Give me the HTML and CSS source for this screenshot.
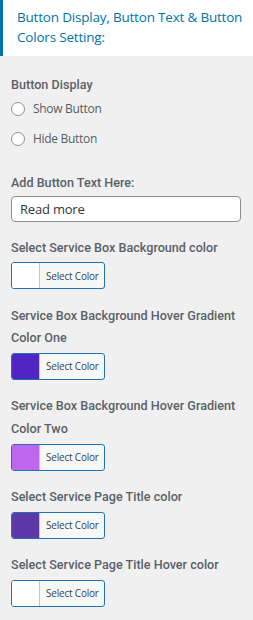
FILE: index.html
```html
<!DOCTYPE html>
<html>
<head>
<meta charset="utf-8">
<link rel="stylesheet" href="styles.css">
</head>
<body>
<div class="panel">
  <div class="section-head">
    <h3 class="section-title">Button Display, Button Text &amp; Button Colors Setting:</h3>
  </div>
  <div class="controls">
    <div class="control control-radio">
      <span class="control-title">Button Display</span>
      <label class="radio-row"><span class="radio"></span><span class="radio-label">Show Button</span></label>
      <label class="radio-row"><span class="radio"></span><span class="radio-label">Hide Button</span></label>
    </div>
    <div class="control control-text">
      <span class="control-title">Add Button Text Here:</span>
      <div class="text-input">Read more</div>
    </div>
    <div class="control">
      <span class="control-title">Select Service Box Background color</span>
      <div class="color-btn"><span class="swatch swatch-white"></span><span class="color-text">Select Color</span></div>
    </div>
    <div class="control">
      <span class="control-title">Service Box Background Hover Gradient Color One</span>
      <div class="color-btn"><span class="swatch swatch-blue"></span><span class="color-text">Select Color</span></div>
    </div>
    <div class="control">
      <span class="control-title">Service Box Background Hover Gradient Color Two</span>
      <div class="color-btn"><span class="swatch swatch-pink"></span><span class="color-text">Select Color</span></div>
    </div>
    <div class="control">
      <span class="control-title">Select Service Page Title color</span>
      <div class="color-btn"><span class="swatch swatch-purple"></span><span class="color-text">Select Color</span></div>
    </div>
    <div class="control">
      <span class="control-title">Select Service Page Title Hover color</span>
      <div class="color-btn"><span class="swatch swatch-white"></span><span class="color-text">Select Color</span></div>
    </div>
  </div>
</div>
</body>
</html>
```
FILE: styles.css
```css
html, body {
  margin: 0;
  padding: 0;
  background: #f0f0f0;
}
body {
  font-family: "Open Sans", "Noto Sans", sans-serif;
  width: 253px;
  height: 620px;
  overflow: hidden;
}
.section-head {
  background: #fff;
  border-left: 3px solid #0073aa;
  height: 56px;
  box-sizing: border-box;
  padding: 8px 10px 0 14px;
}
.section-title {
  margin: 0;
  font-size: 13.5px;
  font-weight: 400;
  line-height: 19.5px;
  color: #0073aa;
  letter-spacing: -0.2px;
}
.controls {
  padding: 18px 12px 0 11px;
  display: flex;
  flex-direction: column;
  gap: 15.5px;
}
.control {
  display: flex;
  flex-direction: column;
}
.control-radio { margin-bottom: 9px; }
.control-text { margin-bottom: -1px; }
.control-title {
  font-family: Roboto, "Open Sans", sans-serif;
  font-size: 12.6px;
  font-weight: 500;
  line-height: 22.6px;
  color: #5a6168;
  margin-bottom: 3px;
  letter-spacing: 0;
}
.control-text .control-title { margin-bottom: 1.5px; }
.radio-row {
  display: flex;
  align-items: center;
  gap: 8px;
  height: 18px;
  margin-top: 0;
  margin-bottom: 12px;
}
.radio-row + .radio-row { margin-bottom: 0; }
.radio {
  width: 12px;
  height: 12px;
  border: 1px solid #8c8f94;
  border-radius: 50%;
  background: #fff;
  flex: none;
}
.radio-label {
  font-size: 12px;
  color: #555d66;
  letter-spacing: -0.3px;
}
.text-input {
  width: 230px;
  height: 26px;
  box-sizing: border-box;
  border: 1px solid #8c8f94;
  border-radius: 4px;
  background: #fff;
  font-size: 13px;
  color: #32373c;
  padding: 0 8px;
  display: flex;
  align-items: center;
  letter-spacing: -0.2px;
}
.color-btn {
  width: 94px;
  height: 27px;
  box-sizing: border-box;
  border: 1px solid #2271b1;
  border-radius: 3px;
  display: flex;
  overflow: hidden;
  background: #f6f7f7;
}
.swatch {
  width: 27px;
  flex: none;
  border-right: 1px solid #c3c4c7;
}
.swatch-white { background: #fff; }
.swatch-blue { background: #4f26c4; }
.swatch-pink { background: #c065ee; }
.swatch-purple { background: #5d38a9; }
.color-text {
  font-size: 10px;
  color: #3c434a;
  display: flex;
  align-items: center;
  padding-left: 6px;
  letter-spacing: -0.2px;
}
```
